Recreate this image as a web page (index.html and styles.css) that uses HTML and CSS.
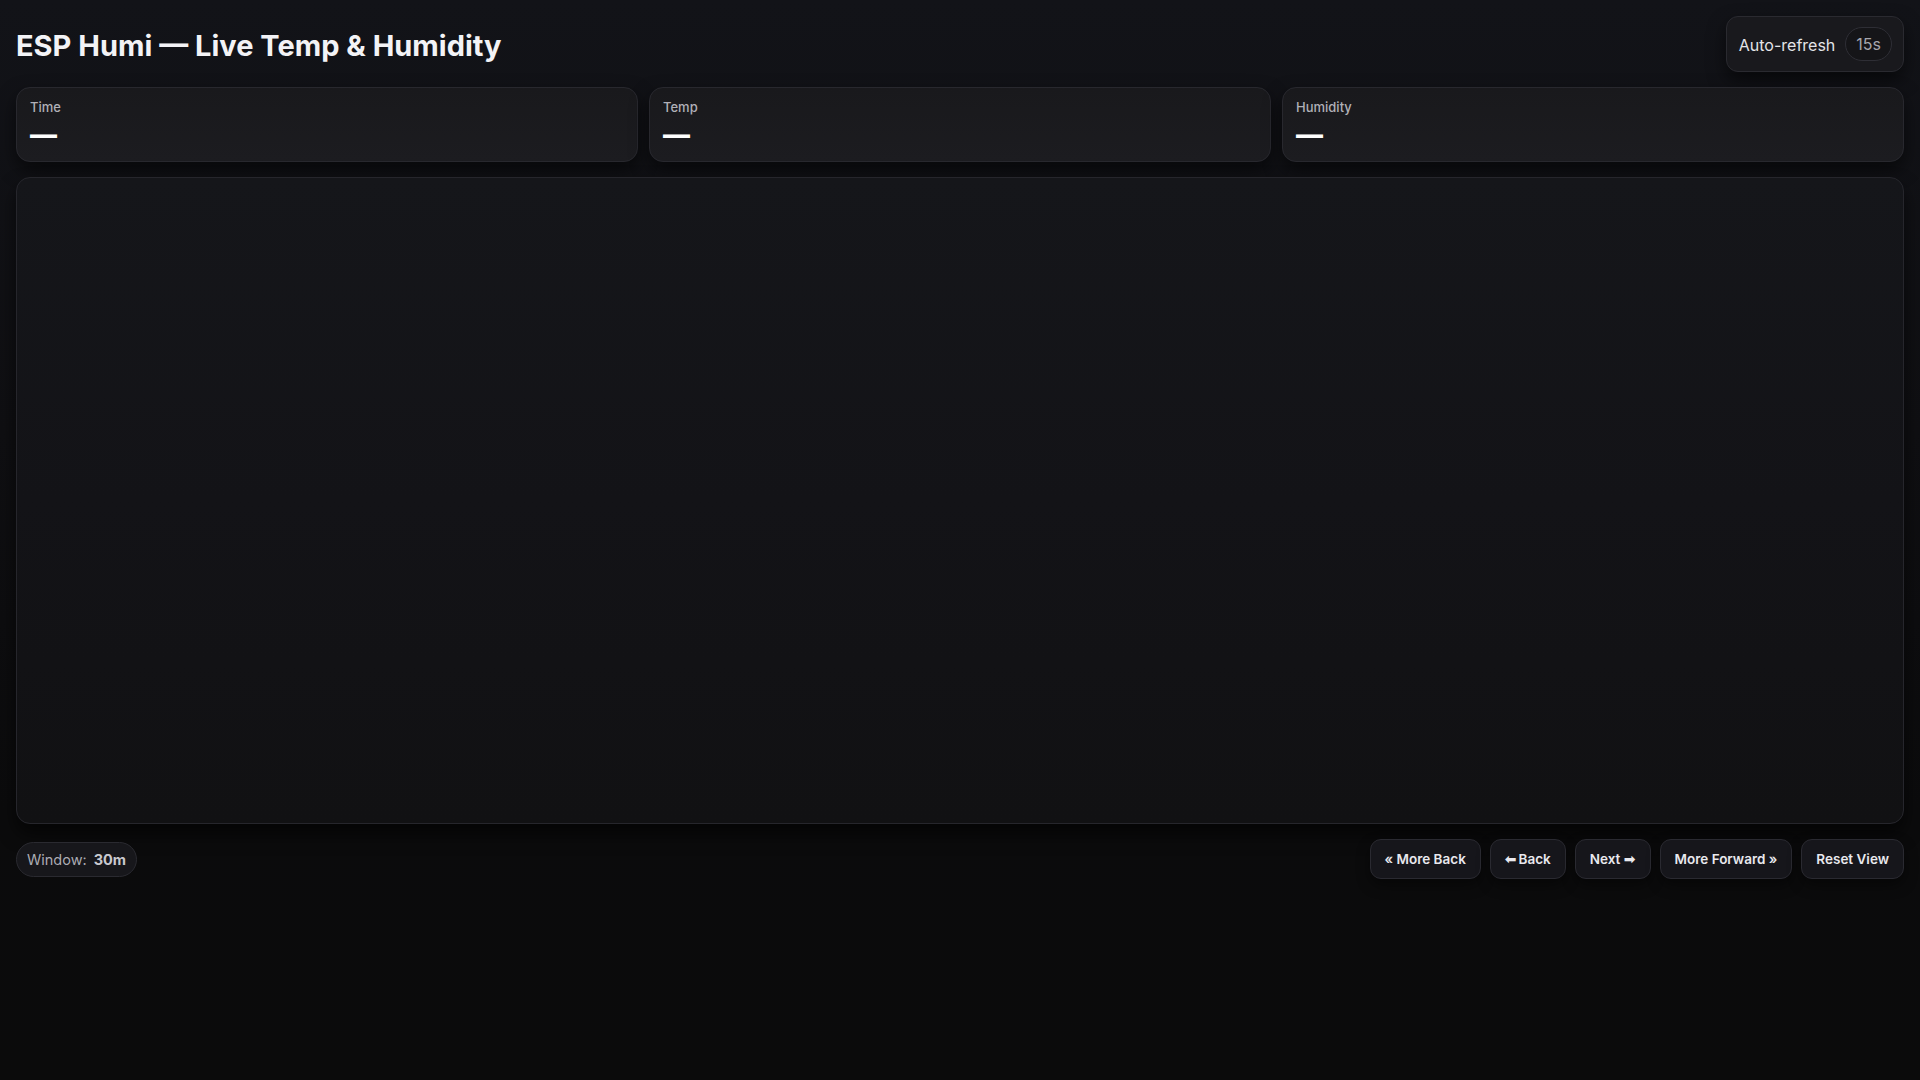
FILE: index.html
```html
<!DOCTYPE html>
<html lang="en">
<head>
<meta charset="utf-8">
<title>ESP Humi — Live Temp &amp; Humidity</title>
<link rel="stylesheet" href="styles.css">
</head>
<body>
<div class="page">
  <header class="header">
    <h1 class="title">ESP Humi — Live Temp &amp; Humidity</h1>
    <div class="refresh">
      <span class="refresh-label">Auto-refresh</span>
      <span class="refresh-pill">15s</span>
    </div>
  </header>

  <section class="stats">
    <div class="stat">
      <div class="stat-label">Time</div>
      <div class="stat-value">—</div>
    </div>
    <div class="stat">
      <div class="stat-label">Temp</div>
      <div class="stat-value">—</div>
    </div>
    <div class="stat">
      <div class="stat-label">Humidity</div>
      <div class="stat-value">—</div>
    </div>
  </section>

  <section class="chart"></section>

  <footer class="footer">
    <div class="window-pill">
      <span class="window-label">Window:</span>
      <span class="window-value">30m</span>
    </div>
    <div class="controls">
      <button class="btn">« More Back</button>
      <button class="btn"><span class="arrow arrow-left">⬅</span>Back</button>
      <button class="btn">Next <span class="arrow arrow-right">➡</span></button>
      <button class="btn">More Forward »</button>
      <button class="btn">Reset View</button>
    </div>
  </footer>
</div>
</body>
</html>
```

FILE: styles.css
```css
* { box-sizing: border-box; }

html, body {
  margin: 0;
  height: 100%;
}

body {
  background: linear-gradient(180deg, #121318 0%, #0f0f12 40%, #0b0b0c 75%, #0b0b0b 100%);
  color: #e8e8ec;
  font-family: Inter, "Noto Sans", "DejaVu Sans", sans-serif;
}

.page {
  padding: 16px;
  display: flex;
  flex-direction: column;
  gap: 15px;
}

.header {
  display: flex;
  align-items: center;
  justify-content: space-between;
  height: 56px;
}

.title {
  margin: 0;
  font-size: 29px;
  font-weight: 700;
  color: #f3f3f6;
  position: relative;
  top: 1px;
}

.refresh {
  display: flex;
  align-items: center;
  gap: 10px;
  padding: 10px 11px 10px 12px;
  background: #19191d;
  border: 1px solid #2a2a30;
  border-radius: 12px;
  box-shadow: 0 8px 18px rgba(0, 0, 0, 0.55);
}

.refresh-label {
  font-size: 16px;
  color: #e4e4e8;
  position: relative;
  top: 1px;
}

.refresh-pill {
  font-size: 16px;
  color: #a6a6ad;
  line-height: 22px;
  padding: 5px 10px;
  border: 1px solid #2e2e35;
  border-radius: 999px;
  background: #151518;
}

.stats {
  display: grid;
  grid-template-columns: repeat(3, 1fr);
  gap: 11px;
}

.stat {
  height: 75px;
  padding: 10px 13px;
  background: linear-gradient(180deg, #19191c 0%, #1c1c20 100%);
  border: 1px solid #28282e;
  border-radius: 14px;
  box-shadow: 0 8px 18px rgba(0, 0, 0, 0.55);
}

.stat-label {
  font-size: 13px;
  font-weight: 500;
  color: #b0b0b7;
  line-height: 18px;
}

.stat-value {
  font-size: 27px;
  font-weight: 800;
  color: #ffffff;
  line-height: 30px;
  margin-top: 4px;
}

.chart {
  height: 647px;
  background: linear-gradient(180deg, #15161a 0%, #131317 50%, #111113 100%);
  border: 1px solid #26262c;
  border-radius: 14px;
  box-shadow: 0 10px 18px rgba(0, 0, 0, 0.6);
}

.footer {
  display: flex;
  align-items: center;
  justify-content: space-between;
}

.window-pill {
  display: flex;
  align-items: center;
  gap: 7px;
  height: 35px;
  padding: 0 10px;
  background: #17171b;
  border: 1px solid #2a2a30;
  border-radius: 999px;
  font-size: 14.5px;
}

.window-label { color: #acacb3; }

.window-value {
  font-weight: 700;
  color: #c9c9cf;
}

.controls {
  display: flex;
  gap: 9px;
}

.btn {
  height: 40px;
  padding: 0 14px;
  font-family: Inter, "DejaVu Sans", sans-serif;
  font-size: 13.5px;
  font-weight: 600;
  color: #e9e9ee;
  background: #16161b;
  border: 1px solid #2a2a31;
  border-radius: 11px;
  box-shadow: 0 6px 14px rgba(0, 0, 0, 0.45);
  cursor: pointer;
}

.arrow {
  font-family: "DejaVu Sans", sans-serif;
  font-size: 14px;
}

.arrow-left { margin-right: 2px; }
.arrow-right { margin-left: 0; }
```
